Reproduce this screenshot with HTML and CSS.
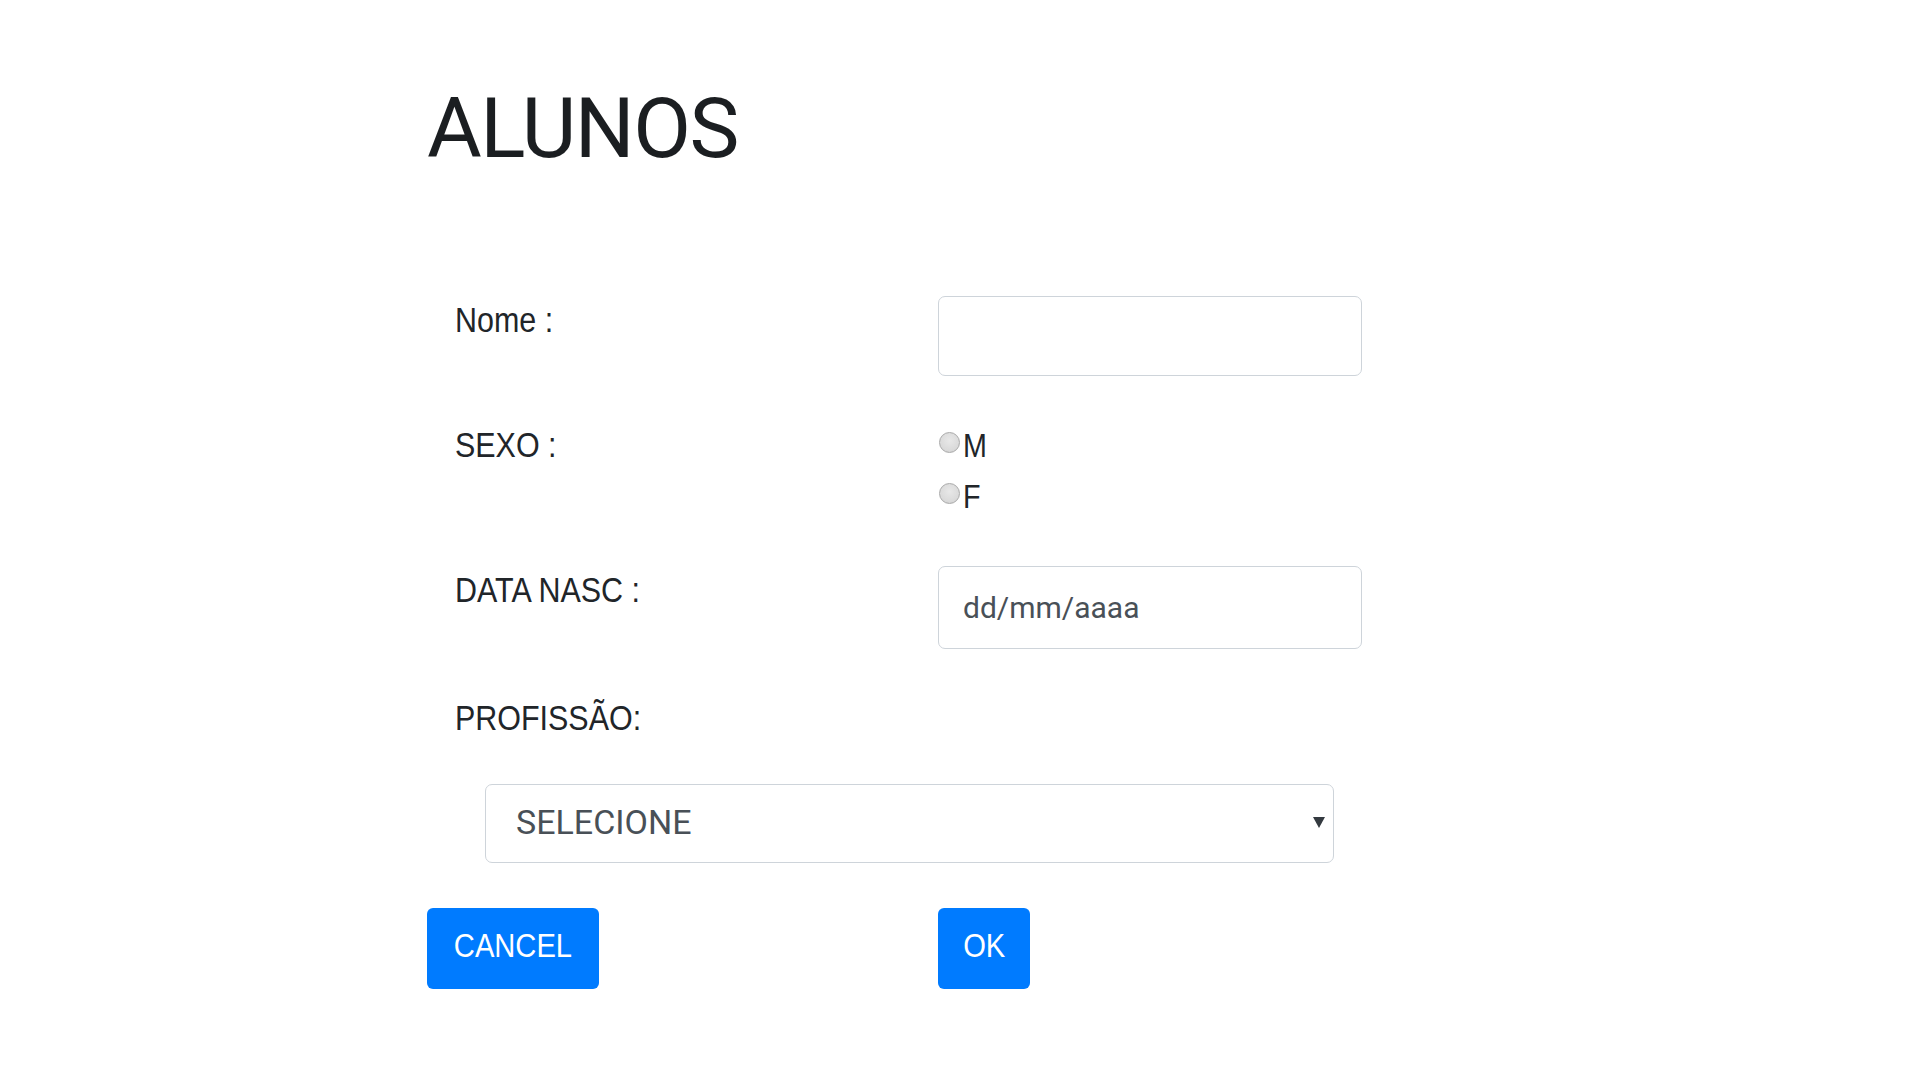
FILE: index.html
```html
<!DOCTYPE html>
<html lang="pt">
<head>
<meta charset="utf-8">
<title>Alunos</title>
<link rel="stylesheet" href="styles.css">
</head>
<body>
<main class="page">
  <h1 class="title">ALUNOS</h1>
  <form class="form">
    <div class="row row-nome">
      <label class="label" for="nome"><span class="narrow">Nome :</span></label>
      <input class="input" id="nome" type="text">
    </div>
    <div class="row row-sexo">
      <span class="label"><span class="narrow">SEXO :</span></span>
      <div class="radios">
        <label class="radio"><input class="radio-input" type="radio" name="sexo"><span class="narrow">M</span></label>
        <label class="radio"><input class="radio-input" type="radio" name="sexo"><span class="narrow">F</span></label>
      </div>
    </div>
    <div class="row row-data">
      <label class="label" for="data"><span class="narrow">DATA NASC :</span></label>
      <input class="input input-date" id="data" type="text" placeholder="dd/mm/aaaa">
    </div>
    <div class="row row-prof">
      <label class="label" for="prof"><span class="narrow">PROFISSÃO:</span></label>
    </div>
    <div class="select-wrap">
      <select class="select" id="prof">
        <option>SELECIONE</option>
      </select>
    </div>
    <div class="buttons">
      <div class="btn-cell"><button type="button" class="btn btn-cancel"><span class="narrow narrow-center">CANCEL</span></button></div>
      <div class="btn-cell"><button type="submit" class="btn btn-ok"><span class="narrow narrow-center">OK</span></button></div>
    </div>
  </form>
</main>
</body>
</html>
```
FILE: styles.css
```css
* { box-sizing: border-box; }
html, body { margin: 0; padding: 0; background: #fff; }
body { font-family: Roboto, "Liberation Sans", Arial, sans-serif; color: #212529; }

.page {
  padding: 79px 0 0 427px;
}

.title {
  margin: 0;
  font-family: Roboto, sans-serif;
  font-weight: 400;
  font-size: 84px;
  line-height: 100px;
  letter-spacing: -1.5px;
  color: #1b1e21;
}

.form { display: flex; flex-direction: column; }

.narrow {
  display: inline-block;
  white-space: nowrap;
  transform: scaleX(0.87);
  transform-origin: 0 50%;
}
.narrow-center { transform-origin: 50% 50%; }

.row {
  display: grid;
  grid-template-columns: 511px 424px;
  align-items: start;
}

.label {
  padding-left: 28px;
  font-family: "Liberation Sans", Arial, sans-serif;
  font-size: 35px;
  line-height: 50px;
  color: #212529;
}

.row-nome { margin-top: 116px; }
.row-sexo { margin-top: 44px; }
.row-data { margin-top: 43px; }
.row-prof { margin-top: 44px; }

.input {
  display: block;
  width: 424px;
  height: 80px;
  margin: 1px 0 0;
  border: 1px solid #ced4da;
  border-radius: 7px;
  background: #fff;
  padding: 0 24px;
  font-family: Roboto, sans-serif;
  font-size: 30px;
  color: #495057;
  outline: none;
}
.row-data .input { height: 83px; margin-top: 1px; }
.input::placeholder { color: #495057; opacity: 1; }

.radios { display: flex; flex-direction: column; }
.radio {
  display: flex;
  align-items: center;
  height: 51px;
  font-family: "Liberation Sans", Arial, sans-serif;
  font-size: 33px;
  line-height: 51px;
  color: #212529;
}
.radio-input {
  -webkit-appearance: none;
  appearance: none;
  width: 21px;
  height: 21px;
  margin: -7px 3px 0 1px;
  border: 1px solid #a9a9a9;
  border-radius: 50%;
  background: radial-gradient(circle at 50% 40%, #e8e8e8 0%, #dadada 65%, #c9c9c9 100%);
  flex: none;
}

.select-wrap {
  position: relative;
  margin: 41px 0 0 58px;
  width: 849px;
}
.select-wrap::after {
  content: "";
  position: absolute;
  right: 9px;
  top: 33px;
  border-left: 6px solid transparent;
  border-right: 6px solid transparent;
  border-top: 11px solid #343a40;
  pointer-events: none;
}
.select {
  -webkit-appearance: none;
  appearance: none;
  display: block;
  width: 849px;
  height: 79px;
  margin: 0;
  padding: 0 40px 4px 30px;
  border: 1px solid #ced4da;
  border-radius: 7px;
  background: #fff;
  font-family: Roboto, sans-serif;
  font-size: 34px;
  color: #495057;
  outline: none;
}

.buttons {
  display: grid;
  grid-template-columns: 511px auto;
  margin-top: 45px;
}
.btn {
  display: block;
  height: 81px;
  margin: 0;
  padding: 0 0 5px;
  border: none;
  border-radius: 6px;
  background: #007bff;
  color: #fff;
  font-family: "Liberation Sans", Arial, sans-serif;
  font-size: 33.5px;
  line-height: 76px;
  text-align: center;
  white-space: nowrap;
  cursor: pointer;
}
.btn-cancel { width: 172px; }
.btn-ok { width: 92px; }
```
